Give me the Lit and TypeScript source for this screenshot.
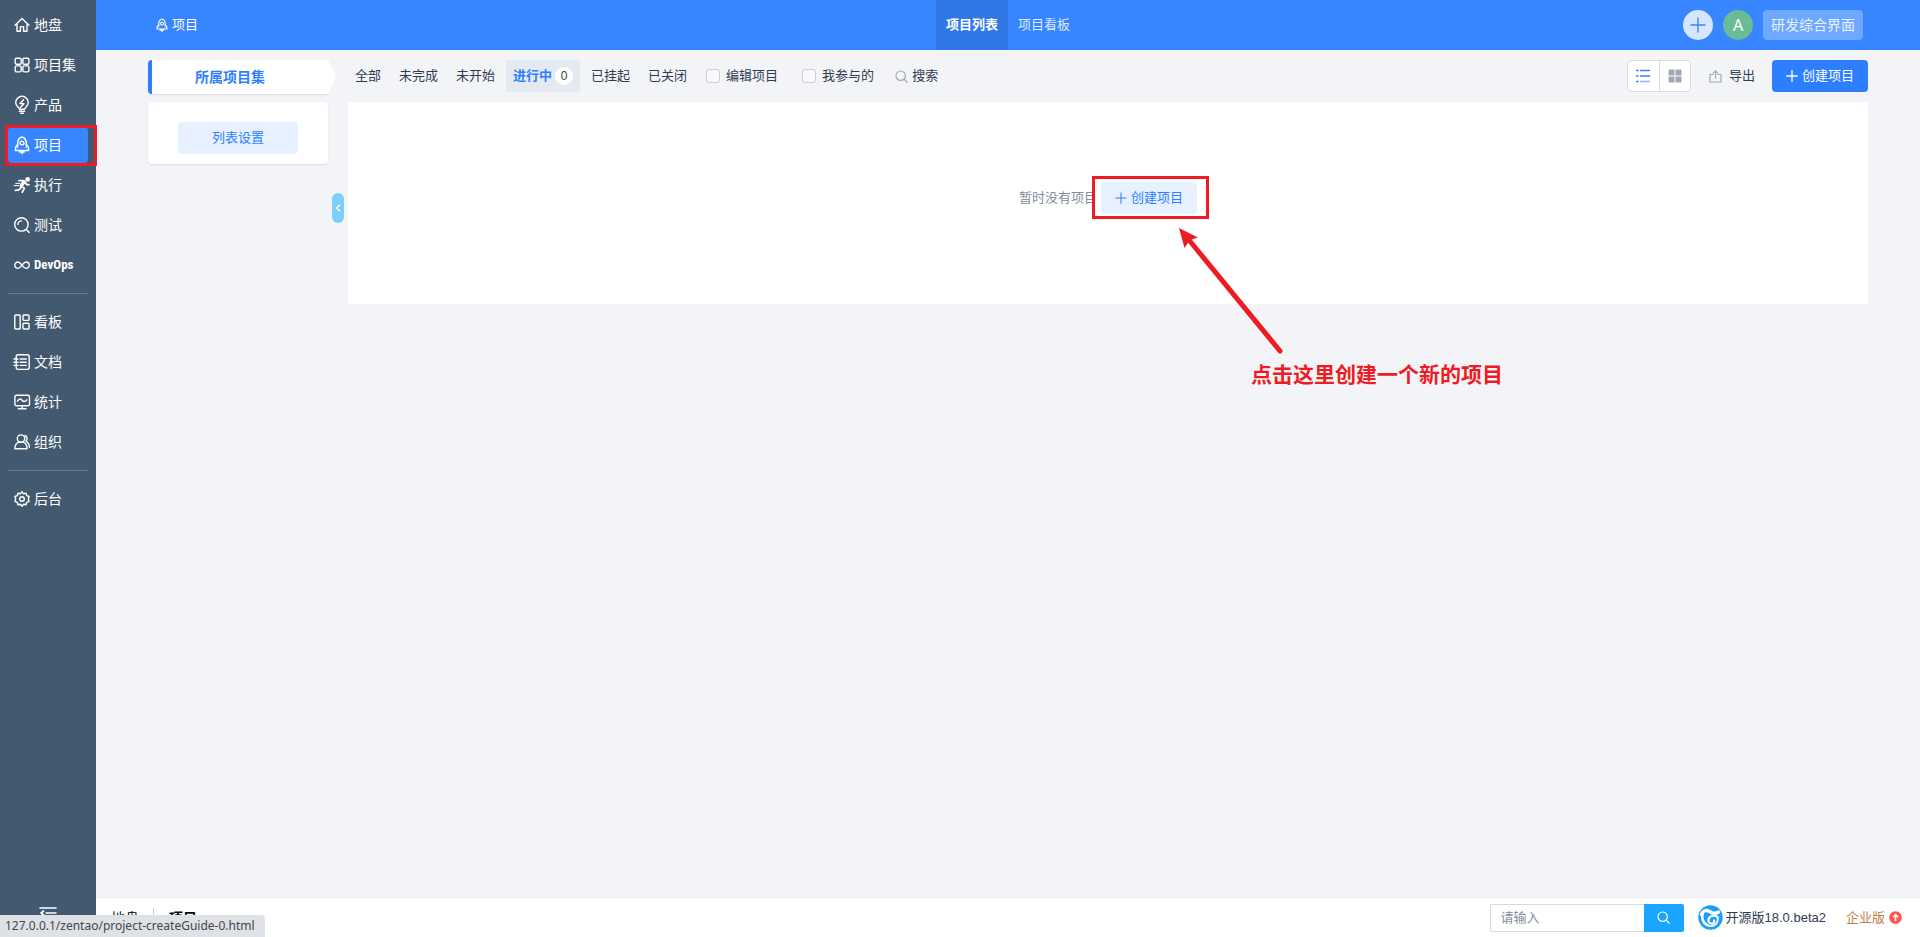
import { LitElement, html, css, svg, nothing } from "lit";
import { customElement, property, state } from "lit/decorators.js";
import { classMap } from "lit/directives/class-map.js";

const glyphs: Record<string, unknown> = {
  home: svg`<path d="M1 8.2 8 1.600l7 6.600M3 7v7.200h3.400V9.600h3.200v4.600H13V7"/>`,
  grid: svg`<rect x="1.200" y="1.200" width="6" height="6" rx="1.300"/><rect x="8.900" y="1.200" width="6" height="6" rx="1.300"/><rect x="1.200" y="8.900" width="6" height="6" rx="1.300"/><rect x="8.900" y="8.900" width="6" height="6" rx="1.300"/>`,
  bulb: svg`<path d="M5.400 12.200C5.200 10.200 1.700 9.200 1.700 5.600a6.300 6.300 0 0 1 12.600 0c0 3.600-3.500 4.600-3.700 6.600z"/><path d="M5.400 14.300h5.200M6.600 16.200h2.800M9.600 2.800 6 6.600l4 .2-3.700 3.600"/>`,
  rocket: svg`<path d="M8 0C5.400.9 3.700 3.200 3.700 6v1.600C2.300 8.700 1.400 10 1.400 11.700v1.700h13.200v-1.700c0-1.700-.9-3-2.300-4.100V6C12.300 3.200 10.600.9 8 0z" stroke-width="1.500"/><path d="M3.800 7.600v3.200M12.200 7.600v3.200" stroke-width="1"/><circle cx="8" cy="6" r="1.900"/><path d="M5.600 13.800h4.800v1.600H9.200L8 17.200l-1.200-1.800H5.600z" fill="currentColor" stroke-width=".6"/>`,
  run: svg`<circle cx="13.600" cy="2.400" r="1.700" fill="currentColor"/><path d="M5 3.600h4.200l2 1.400-3.400 4.200 2.600 2.200-2.200 3.800M7 10.600l-2.200 2.200-3.400.6M11.200 5.600l1.400 2h2.400" stroke-width="1.700"/><path d="M9.800 4.600 7 8.800" stroke-width="3"/><path d="M1.800 6.400h4M0 8.600h4.600" stroke-width="1"/>`,
  test: svg`<circle cx="7.400" cy="7.400" r="6.700"/><path d="m12.200 12.400 3 3M3.900 7.400a3.500 3.500 0 0 1 3.500-3.500"/>`,
  infinity: svg`<path d="M8 8.200C6.600 6.200 5.400 5 4 5a3.200 3.200 0 0 0 0 6.400C5.400 11.400 6.600 10.200 8 8.200S10.600 5 12 5a3.200 3.200 0 0 1 0 6.400c-1.400 0-2.600-1.200-4-3.200z"/>`,
  board: svg`<rect x=".8" y="1" width="5.400" height="14" rx=".8"/><rect x="9" y="1" width="6" height="5.400" rx=".8"/><rect x="9" y="9.200" width="6" height="5.800" rx=".8"/>`,
  doc: svg`<rect x="2.200" y=".8" width="13" height="14.600" rx="1.800"/><path d="M6.200 5h6M6.200 8.200h6M6.200 11.400h6M0 5h4M0 8.200h4M0 11.400h4"/>`,
  chart: svg`<rect x=".9" y="1.200" width="14.600" height="10.600" rx="1.600"/><path d="M3.600 7.200c1.600-3 3-2.600 4.400-1s3 2 4.800-.4M8.200 12v2.500M4.400 14.700h7.600"/>`,
  people: svg`<circle cx="7" cy="4.600" r="3.700"/><path d="M.9 14.800c0-3.600 2-6 4-6.600h4.200c2 .6 4 3 4 6.600zM11 1.500c2.200.6 2.800 3.900.9 5.700 2 1 3.500 3 3.500 6.400"/>`,
  gear: svg`<path d="M8 .8l1.600 1.900 2.400-.5.700 2.400 2.400.9-.8 2.400.8 2.500-2.400.9-.7 2.400-2.400-.5L8 15.200l-1.600-2-2.400.5-.7-2.400-2.400-.9.800-2.500-.8-2.400 2.400-.9.700-2.400 2.400.5z"/><circle cx="8" cy="8" r="2.300"/>`,
  search: svg`<circle cx="7" cy="7" r="5.800"/><path d="m11.400 11.400 3.800 3.800"/>`,
  plus: svg`<path d="M8 1v14M1 8h14"/>`,
  share: svg`<path d="M5 5.600H1.200v9.200h13.600V5.600H11M8 10V1.200M5.200 3.800 8 1l2.800 2.800"/>`,
  left: svg`<path d="M11 2.500 5 8l6 5.500" stroke-width="2.600"/>`,
  collapse: svg`<path d="M0 3h16M6 8h10M0 13h16M3.600 6 1 8l2.600 2" stroke-width="1.600"/>`,
};

const BLUE = css`#2e7fff`;

@customElement("zt-icon")
class ZtIcon extends LitElement {
  @property() name = "";
  static styles = css`
    :host { display: inline-flex; width: 16px; height: 16px; flex: none; }
    svg {
      width: 100%; height: 100%; overflow: visible; fill: none; stroke: currentColor;
      stroke-width: var(--stroke, 1.4); stroke-linecap: round; stroke-linejoin: round;
    }
  `;
  render() {
    return html`<svg viewBox="0 0 16 16" aria-hidden="true">${glyphs[this.name]}</svg>`;
  }
}

const menuGroups = [
  [
    ["home", "地盘"], ["grid", "项目集"], ["bulb", "产品"], ["rocket", "项目"],
    ["run", "执行"], ["test", "测试"], ["infinity", "DevOps"],
  ],
  [["board", "看板"], ["doc", "文档"], ["chart", "统计"], ["people", "组织"]],
  [["gear", "后台"]],
];

@customElement("zt-sidebar")
class ZtSidebar extends LitElement {
  static styles = css`
    :host { display: flex; flex-direction: column; background: #43596f; color: #fff; }
    nav { flex: 1; padding-top: 5px; }
    ul { list-style: none; margin: 0; padding: 0 8px; }
    ul + ul::before { content: ""; display: block; height: 1px; margin: 8px 0; background: #687b91; }
    li { height: 40px; display: flex; align-items: center; position: relative; }
    a {
      flex: 1; height: 36px; padding-left: 6px; display: flex; align-items: center; gap: 4px;
      color: inherit; text-decoration: none; font-size: 14px; border-radius: 4px;
    }
    a.active { background: #3785ff; }
    .latin { font-family: "Liberation Sans Narrow", "Roboto Condensed", "Liberation Sans", sans-serif; font-size: 13px; font-weight: 700; }
    .mark { position: absolute; inset: 0 -9px -1px -3px; border: 3px solid #ed1c24; }
    button {
      align-self: center; width: 40px; height: 32px; padding: 0; border: 0; background: none; color: #fff;
      display: flex; align-items: flex-start; justify-content: center;
    }
  `;
  render() {
    return html`
      <nav aria-label="主导航">
        ${menuGroups.map((group) => html`<ul>
          ${group.map(([icon, label]) => {
            const active = label === "项目";
            return html`<li>
              <a href="#" class=${classMap({ active })}>
                <zt-icon name=${icon}></zt-icon>
                <span class=${classMap({ latin: label === "DevOps" })}>${label}</span>
              </a>
              ${active ? html`<span class="mark"></span>` : nothing}
            </li>`;
          })}
        </ul>`)}
      </nav>
      <button aria-label="收起"><zt-icon name="collapse"></zt-icon></button>
    `;
  }
}

@customElement("zt-header")
class ZtHeader extends LitElement {
  static styles = css`
    :host {
      display: grid; grid-template-columns: 1fr auto 1fr; height: 50px; background: #3785ff;
      color: #fff; font-size: 13px;
    }
    a { color: inherit; text-decoration: none; display: flex; align-items: center; }
    .title { padding-left: 60px; gap: 4px; justify-self: start; }
    .title zt-icon { width: 12px; height: 12px; }
    .tabs { display: flex; }
    .tabs a { padding: 0 10px; color: #dce9ff; }
    .tabs a.active { background: #3078e6; color: #fff; font-weight: 700; }
    .tools { display: flex; align-items: center; justify-content: flex-end; gap: 10px; padding-right: 57px; }
    .tools button { height: 30px; padding: 0; border: 0; color: #fff; font: inherit; }
    .round { width: 30px; border-radius: 50%; display: grid; place-items: center; }
    .tools .add { background: #d7e6ff; color: #3785ff; }
    .tools .user { background: #6bbc96; font: 16px "Noto Sans", sans-serif; }
    .tools .mode { background: #6fa8ff; color: #e8f1ff; border-radius: 4px; padding: 0 8px; font-size: 14px; }
  `;
  render() {
    return html`
      <a class="title" href="#"><zt-icon name="rocket"></zt-icon>项目</a>
      <nav class="tabs"><a class="active" href="#">项目列表</a><a href="#">项目看板</a></nav>
      <div class="tools">
        <button class="round add" aria-label="新增"><zt-icon name="plus"></zt-icon></button>
        <button class="round user">A</button>
        <button class="mode">研发综合界面</button>
      </div>
    `;
  }
}

@customElement("zt-toolbar")
class ZtToolbar extends LitElement {
  @state() private current = "进行中";
  static styles = css`
    :host { display: flex; align-items: center; height: 32px; color: #313c52; font-size: 13px; white-space: nowrap; }
    a { color: inherit; text-decoration: none; }
    .tabs { display: flex; gap: 4px; }
    .tabs a { height: 32px; padding: 0 7px; display: flex; align-items: center; gap: 3px; border-radius: 4px; }
    .tabs .active { background: #e4e9f2; color: ${BLUE}; font-weight: 700; }
    .count {
      width: 18px; height: 18px; border-radius: 50%; background: #fff; color: #313c52;
      text-align: center; line-height: 18px; font-size: 12px; font-weight: 400;
    }
    label { display: flex; align-items: center; gap: 6px; margin-right: 24px; }
    .tabs + label { margin-left: 12px; }
    input {
      appearance: none; width: 14px; height: 14px; margin: 0; border: 1px solid #cbced6;
      border-radius: 3px; background: #f8f9fa;
    }
    button { font: inherit; color: inherit; border: 0; background: none; padding: 0; display: flex; align-items: center; gap: 4px; }
    .muted { color: #a2a6b2; width: 13px; height: 13px; }
    .search { margin-left: -3px; }
    .views { margin-left: auto; display: flex; height: 32px; box-sizing: border-box; border: 1px solid #d9dbe0; border-radius: 4px; background: #fff; }
    .views button { width: 31px; justify-content: center; color: #a4a8b6; }
    .views button + button { border-left: 1px solid #d9dbe0; }
    .views svg { width: 14px; height: 14px; }
    .export { margin: 0 17px 0 18px; gap: 7px; }
    .create { height: 32px; padding: 0 14px; background: ${BLUE}; color: #fff; border-radius: 4px; }
    .create zt-icon { width: 12px; height: 12px; --stroke: 1.8; }
  `;
  render() {
    return html`
      <nav class="tabs">
        ${["全部", "未完成", "未开始", "进行中", "已挂起", "已关闭"].map((name) => {
          const active = name === this.current;
          return html`<a href="#" class=${classMap({ active })} @click=${() => (this.current = name)}>${name}${active ? html`<span class="count">0</span>` : nothing}</a>`;
        })}
      </nav>
      <label><input type="checkbox" />编辑项目</label>
      <label><input type="checkbox" />我参与的</label>
      <button class="search"><zt-icon class="muted" name="search"></zt-icon>搜索</button>
      <div class="views">
        <button aria-label="列表">
          <svg viewBox="0 0 14 14" fill="none" stroke="#3d7dff" stroke-width="1.500"><path d="M4 1.500h10M4 7h10M0 1.500h2.500M0 7h2.500M0 12.500h2.500"/><path d="M4 12.500h10" stroke="#8fb1ff"/></svg>
        </button>
        <button aria-label="卡片">
          <svg viewBox="0 0 14 14" fill="currentColor"><path d="M.500.500h6v6h-6zM7.500.500h6v6h-6zM.500 7.500h6v6h-6zM7.500 7.500h6v6h-6z"/></svg>
        </button>
      </div>
      <button class="export"><zt-icon class="muted" name="share"></zt-icon>导出</button>
      <button class="create"><zt-icon name="plus"></zt-icon>创建项目</button>
    `;
  }
}

@customElement("zt-footer")
class ZtFooter extends LitElement {
  static styles = css`
    :host {
      display: flex; align-items: center; height: 40px; box-sizing: border-box; padding: 0 18px 0 0;
      border-top: 1px solid #e9ebf0; background: #fff; color: #313c52; font-size: 13px;
    }
    a { color: inherit; text-decoration: none; display: flex; align-items: center; }
    .crumbs { display: flex; align-items: center; color: #000; font-size: 14px; margin-right: auto; }
    .crumbs a { padding: 0 14px 0 15px; }
    .crumbs a + a { border-left: 1px solid #ccc; font-weight: 700; }
    form { display: flex; height: 28px; }
    input {
      width: 154px; box-sizing: border-box; border: 1px solid #d8dbde; border-right: 0; border-radius: 2px 0 0 2px;
      padding: 0 10px; font: inherit; outline: 0;
    }
    input::placeholder { color: #838a9d; opacity: 1; }
    form button { width: 40px; padding: 0; border: 0; border-radius: 0 2px 2px 0; background: #1aa5ff; color: #fff; display: grid; place-items: center; }
    form zt-icon { width: 13px; height: 13px; }
    .version { margin: 0 20px 0 14px; gap: 3px; }
    .version svg { width: 25px; height: 25px; }
    .pro { color: #b8814a; gap: 4px; }
    .pro svg { width: 13px; height: 13px; }
  `;
  render() {
    return html`
      <nav class="crumbs"><a href="#">地盘</a><a href="#">项目</a></nav>
      <form @submit=${(e: Event) => e.preventDefault()}>
        <input type="text" aria-label="搜索" placeholder="请输入" />
        <button aria-label="搜索"><zt-icon name="search"></zt-icon></button>
      </form>
      <a class="version" href="#">
        <svg viewBox="0 0 25 25" fill="none" stroke="#fff" stroke-linecap="round">
          <circle cx="12.500" cy="12.500" r="12.200" fill="#1ba0f5" stroke="none"/>
          <path d="M3.500 9.500C5 5.500 8 4.600 11 6.200s5 3.400 9.500.800" stroke-width="3.400"/>
          <path d="M4.600 9c-1.200 4 .2 8.800 4.600 11" stroke-width="2.600"/>
          <path d="M20 12.500c-2.600-2.600-7.200-2.300-9 .6-1.500 2.600 0 5.600 2.600 5.600 2.200 0 3.400-2 2.400-3.400" stroke-width="2.200"/>
          <path d="M19.700 13.500c.6 4-2.200 7.500-6.400 7.700-1.600 0-3-.3-4.300-1.200" stroke-width="1.800"/>
        </svg>开源版18.0.beta2</a>
      <a class="pro" href="#">企业版
        <svg viewBox="0 0 13 13"><circle cx="6.500" cy="6.500" r="6.300" fill="#ff5550"/><path d="M6.500 10V3.800M3.900 6.200l2.600-2.700 2.600 2.700" fill="none" stroke="#fff" stroke-width="1.500"/></svg>
      </a>
    `;
  }
}

@customElement("app-root")
class AppRoot extends LitElement {
  static styles = css`
    :host {
      display: grid; grid-template-columns: 96px 1fr; min-height: 100vh; background: #f3f4f7;
      font-family: "Liberation Sans", "Noto Sans CJK SC", sans-serif; font-size: 13px; line-height: 20px; color: #313c52;
    }
    .page { display: flex; flex-direction: column; min-width: 0; }
    .body {
      flex: 1; display: grid; grid-template-columns: 180px 20px 1fr; grid-template-rows: auto 1fr;
      row-gap: 8px; padding: 10px 52px; align-items: start;
    }
    .heading {
      position: relative; height: 34px; box-sizing: border-box; border-left: 4px solid ${BLUE}; border-radius: 4px 0 0 4px;
      background: #fff; padding-right: 20px; display: flex; align-items: center; justify-content: center;
      margin: 0; color: ${BLUE}; font-size: 14px; font-weight: 700; box-shadow: 0 1px 2px #0000001a;
    }
    .heading::after {
      content: ""; position: absolute; left: 100%; top: 0; width: 8px; height: 100%;
      background: #fff; clip-path: polygon(0 0, 100% 50%, 0 100%);
    }
    zt-toolbar { grid-column: 3; }
    button { font: inherit; border: 0; padding: 0; }
    .card { background: #fff; border-radius: 4px; padding: 20px 30px 10px; box-shadow: 0 1px 2px #0000001a; }
    .soft { height: 32px; border-radius: 4px; background: #e6f0ff; color: ${BLUE}; display: flex; align-items: center; justify-content: center; }
    .card .soft { width: 100%; }
    .handle {
      justify-self: center; width: 12px; height: 30px; margin-top: 91px; border-radius: 6px;
      background: #7ecefe; color: #fff; display: grid; place-items: center;
    }
    .handle zt-icon { width: 8px; height: 8px; }
    .empty {
      background: #fff; padding: 80px 0 90px; display: flex; justify-content: center; align-items: center;
      gap: 4px; color: #838a9d;
    }
    .spot { position: relative; }
    .spot .soft { padding: 0 14px; gap: 4px; }
    .spot zt-icon { width: 12px; height: 12px; }
    .frame { position: absolute; inset: -6px -12px -5px -9px; border: 3px solid #ed1c24; }
    .arrow { position: absolute; left: 78px; top: 46px; width: 106px; height: 128px; }
    .note {
      position: absolute; left: 150px; top: 176px; margin: 0; color: #ed1c24; font-size: 21px;
      line-height: 34px; font-weight: 700; white-space: nowrap;
    }
    .status {
      position: fixed; left: 0; bottom: 0; height: 22px; padding: 0 10px 0 5px; border-radius: 0 4px 0 0;
      background: #dee1e6; color: #43464b; font: 12px/22px "Noto Sans", sans-serif;
    }
  `;
  render() {
    return html`
      <zt-sidebar></zt-sidebar>
      <div class="page">
        <zt-header></zt-header>
        <main class="body">
          <h2 class="heading">所属项目集</h2>
          <zt-toolbar></zt-toolbar>
          <aside class="card"><button class="soft">列表设置</button></aside>
          <button class="handle" aria-label="收起侧栏"><zt-icon name="left"></zt-icon></button>
          <section class="empty">
            <span>暂时没有项目</span>
            <div class="spot">
              <button class="soft"><zt-icon name="plus"></zt-icon>创建项目</button>
              <span class="frame"></span>
              <svg class="arrow" viewBox="0 0 106 128" aria-hidden="true">
                <path d="M10 12 101 123" stroke="#ed1c24" stroke-width="5" stroke-linecap="round"/>
                <path d="M0 0 19 9.500 11 12 5.500 20z" fill="#ed1c24"/>
              </svg>
              <p class="note">点击这里创建一个新的项目</p>
            </div>
          </section>
        </main>
        <zt-footer></zt-footer>
      </div>
      <div class="status">127.0.0.1/zentao/project-createGuide-0.html</div>
    `;
  }
}
